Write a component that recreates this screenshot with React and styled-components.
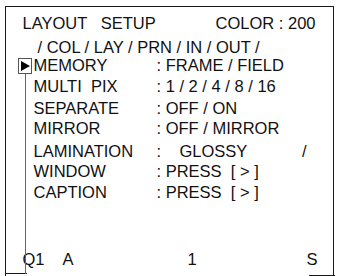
import React from "react";
import styled, { createGlobalStyle } from "styled-components";

const Global = createGlobalStyle`
  html, body { margin: 0; padding: 0; background: #fff; }
  body { overflow: hidden; }
`;

const Frame = styled.div`
  position: relative;
  box-sizing: border-box;
  margin: 6px 0 0 5px;
  width: 329px;
  height: 270px;
  border: 1.5px solid #1a1a1a;
  border-bottom: none;
  display: flex;
  flex-direction: column;
  font-family: "Liberation Sans", Arial, sans-serif;
  font-size: 16.5px;
  line-height: 21px;
  color: #111;
  white-space: pre;

  &::before,
  &::after {
    content: "";
    position: absolute;
    height: 1.5px;
    background: #1a1a1a;
  }
  &::before { left: -1.5px; bottom: 2px; width: 22px; }
  &::after { right: -1.5px; bottom: 0; width: 26px; }
`;

const Header = styled.div`
  display: flex;
  justify-content: space-between;
  padding: 6px 17.5px 0 16.5px;
`;

const Tabs = styled.div`
  margin-top: 3px;
  padding-left: 31.5px;
`;

const Menu = styled.div`
  display: flex;
  flex-direction: column;
  margin-top: -3px;
  padding-left: 27.5px;
`;

const Row = styled.div`
  display: grid;
  grid-template-columns: 123px auto;
  margin-top: ${(p) => p.$shift || 0}px;
`;

const Cursor = styled.div`
  position: absolute;
  left: 11.5px;
  top: 50.5px;
  width: 14px;
  height: 16px;
  box-sizing: border-box;
  border: 1.5px solid #555;
  display: flex;
  align-items: center;
  justify-content: flex-end;
  padding-right: 1px;

  &::before {
    content: "";
    width: 0;
    height: 0;
    border-top: 5.5px solid transparent;
    border-bottom: 5.5px solid transparent;
    border-left: 9px solid #000;
  }
`;

const CursorLine = styled.div`
  position: absolute;
  left: 18.5px;
  top: 66.5px;
  bottom: 2px;
  width: 1.5px;
  background: #666;
`;

const Footer = styled.div`
  margin-top: auto;
  padding: 0 0 6.5px 16.5px;
  display: grid;
  grid-template-columns: 40px 125px 119px auto;
`;

const rows = [
  ["MEMORY", ": FRAME / FIELD", 0],
  ["MULTI  PIX", ": 1 / 2 / 4 / 8 / 16", 0],
  ["SEPARATE", ": OFF / ON", 1],
  ["MIRROR", ": OFF / MIRROR", -1],
  ["LAMINATION", ":    GLOSSY            /", 2],
  ["WINDOW", ": PRESS  [ > ]", -1],
  ["CAPTION", ": PRESS  [ > ]", 0],
];

export default function App() {
  return (
    <>
      <Global />
      <Frame>
        <Header>
          <span>LAYOUT   SETUP</span>
          <span>COLOR : 200</span>
        </Header>
        <Tabs>/ COL / LAY / PRN / IN / OUT /</Tabs>
        <Menu>
          {rows.map(([label, value, shift]) => (
            <Row key={label} $shift={shift}>
              <span>{label}</span>
              <span>{value}</span>
            </Row>
          ))}
        </Menu>
        <Footer>
          <span>Q1</span>
          <span>A</span>
          <span>1</span>
          <span>S</span>
        </Footer>
        <Cursor />
        <CursorLine />
      </Frame>
    </>
  );
}
